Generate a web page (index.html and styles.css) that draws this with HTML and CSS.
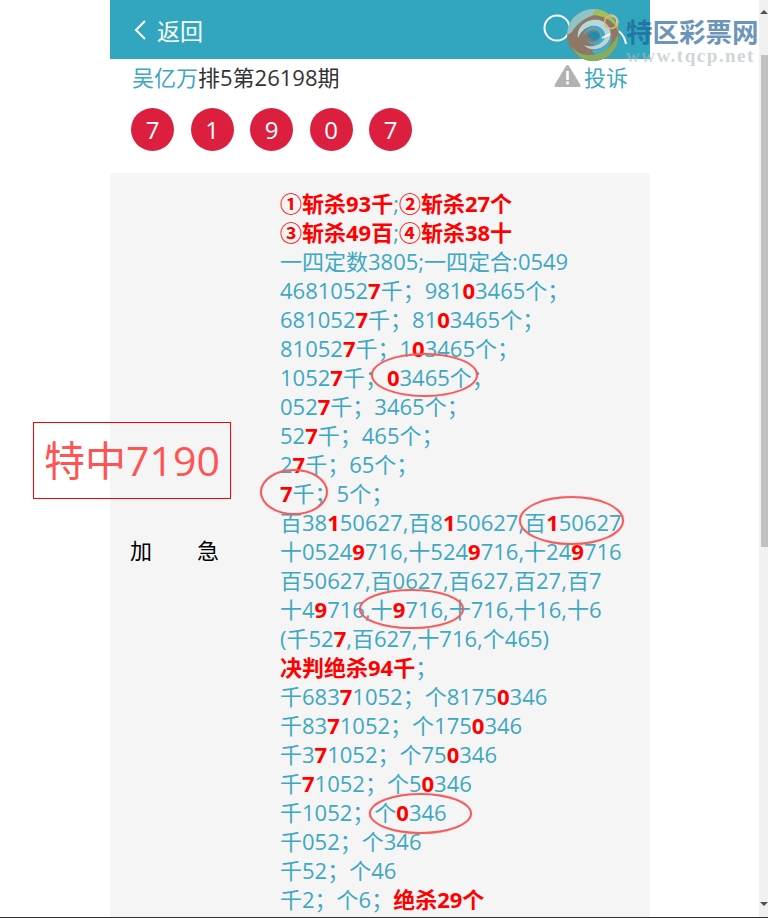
FILE: index.html
```html
<!DOCTYPE html>
<html lang="zh-CN">
<head>
  <meta charset="UTF-8">
  <title>吴亿万排5第26198期</title>
  <link rel="stylesheet" href="styles.css">
</head>
<body>
  <div class="page">
    <div class="wrap">
      <!-- Header -->
      <div class="header">
        <a class="back">
          <svg class="back-icon" width="14" height="22" viewBox="0 0 14 22"><path d="M12 2 L3 11 L12 20" fill="none" stroke="#fff" stroke-width="2"/></svg>
          返回
        </a>
        <div class="tools">
          <svg width="30" height="30" viewBox="0 0 30 30"><circle cx="14" cy="14" r="12.5" fill="none" stroke="#fff" stroke-width="2"/></svg>
          <svg width="34" height="32" viewBox="0 0 34 32"><circle cx="16" cy="8" r="6.5" fill="none" stroke="#fff" stroke-width="2"/><path d="M2 30 C4 20 9 15 16 15 C23 15 29 20 31 30" fill="none" stroke="#fff" stroke-width="2"/></svg>
        </div>
      </div>

      <!-- Title -->
      <div class="title-row">
        <div class="title"><span class="author">吴亿万</span>排5第26198期</div>
        <div class="report">
          <svg width="27" height="23" viewBox="0 0 27 23"><path d="M13.5 1 Q14.5 1 15 2 L26.5 21 Q27 23 25 23 L2 23 Q0 23 .5 21 L12 2 Q12.5 1 13.5 1 Z" fill="#b2b2b2"/><rect x="12.2" y="7" width="2.6" height="9" fill="#fff"/><rect x="12.2" y="17.5" width="2.6" height="2.8" fill="#fff"/></svg>
          <span>投诉</span>
        </div>
      </div>

      <!-- Balls -->
      <div class="balls">
        <span class="ball">7</span>
        <span class="ball">1</span>
        <span class="ball">9</span>
        <span class="ball">0</span>
        <span class="ball">7</span>
      </div>

      <!-- Content -->
      <div class="panel">
        <div class="urgent"><span>加</span><span>急</span></div>
        <div class="lines">
          <p class="hot">①斩杀93千<i>;</i>②斩杀27个</p>
          <p class="hot">③斩杀49百<i>;</i>④斩杀38十</p>
          <p>一四定数3805;一四定合:0549</p>
          <p>4681052<b>7</b>千；981<b>0</b>3465个；</p>
          <p>681052<b>7</b>千；81<b>0</b>3465个；</p>
          <p>81052<b>7</b>千；1<b>0</b>3465个；</p>
          <p>1052<b>7</b>千；<b>0</b>3465个；</p>
          <p>052<b>7</b>千；3465个；</p>
          <p>52<b>7</b>千；465个；</p>
          <p>2<b>7</b>千；65个；</p>
          <p><b>7</b>千；5个；</p>
          <p>百38<b>1</b>50627,百8<b>1</b>50627,百<b>1</b>50627</p>
          <p>十0524<b>9</b>716,十524<b>9</b>716,十24<b>9</b>716</p>
          <p>百50627,百0627,百627,百27,百7</p>
          <p>十4<b>9</b>716,十<b>9</b>716,十716,十16,十6</p>
          <p>(千52<b>7</b>,百627,十716,个465)</p>
          <p><strong>决判绝杀94千</strong>；</p>
          <p>千683<b>7</b>1052；个8175<b>0</b>346</p>
          <p>千83<b>7</b>1052；个175<b>0</b>346</p>
          <p>千3<b>7</b>1052；个75<b>0</b>346</p>
          <p>千<b>7</b>1052；个5<b>0</b>346</p>
          <p>千1052；个<b>0</b>346</p>
          <p>千052；个346</p>
          <p>千52；个46</p>
          <p>千2；个6；<strong>绝杀29个</strong></p>
        </div>
      </div>
    </div>

    <!-- Stamp and hand drawn rings over the content -->
    <div class="stamp">特中7190</div>
    <span class="ring ring-a"></span>
    <span class="ring ring-b"></span>
    <span class="ring ring-c"></span>
    <span class="ring ring-d"></span>
    <span class="ring ring-e"></span>

    <!-- Watermark -->
    <div class="mark">
      <svg class="mark-logo" width="54" height="54" viewBox="0 0 54 54">
        <circle cx="27" cy="27" r="26" fill="#8d7867"/>
        <path d="M27 1 A26 26 0 0 1 41 5 C30 5 14 10 6 24 C3 26 2 27 1 27 A26 26 0 0 1 27 1 Z" fill="#8fc4c4"/>
        <path d="M30 1 A26 26 0 0 1 53 27 C52 18 44 8 26 7 Z" fill="#a3bd5a"/>
        <path d="M5 38 C14 50 32 50 44 38 C48 34 51 30 52 26 C54 40 42 53 27 53 C17 53 9 47 5 38 Z" fill="#86ad5e"/>
        <path d="M12 30 C10 18 22 10 33 12 C44 15 48 26 42 34 C36 42 24 44 18 37 C24 40 34 38 37 31 C40 23 33 16 25 18 C18 20 14 25 12 30 Z" fill="#b7d8d8"/>
        <path d="M17 29 C18 21 26 16 33 19 C40 22 41 30 36 34 C31 39 23 37 21 32 C24 35 30 35 33 31 C36 27 33 22 28 22 C23 22 19 25 17 29 Z" fill="#46a9cc"/>
        <path d="M22 29 C22 25 27 23 30 24 C34 25 35 29 32 31 C29 33 25 32 22 29 Z" fill="#1f8cb4"/>
        <path d="M26 42 C34 42 42 38 46 28 C46 38 38 46 28 46 Z" fill="#3fb0d0"/>
        <path d="M36 30 L44 26" fill="none" stroke="#fff" stroke-width="1.5"/>
        <circle cx="45" cy="14" r="6.5" fill="none" stroke="#eab070" stroke-width="1.5"/>
      </svg>
      <div class="mark-text">
        <div class="mark-name">特区彩票网</div>
        <div class="mark-url">www.tqcp.net</div>
      </div>
    </div>
  </div>

  <!-- Scrollbar -->
  <div class="scrollbar">
    <div class="arrow-up"></div>
    <div class="thumb"></div>
    <div class="arrow-down"></div>
  </div>
</body>
</html>
```

FILE: styles.css
```css
/* General Styles */
html, body {
  margin: 0;
  padding: 0;
  height: 918px;
  overflow: hidden;
  background: #fff;
}

body {
  font-family: "Open Sans", "Noto Sans CJK SC", sans-serif;
  color: #333;
  border-bottom: 1px solid #333;
  box-sizing: border-box;
}

.page {
  position: relative;
  height: 917px;
  overflow: hidden;
}

.wrap {
  width: 540px;
  margin-left: 110px;
}

/* Header */
.header {
  height: 59px;
  background: #32a6bf;
  display: flex;
  justify-content: space-between;
  align-items: center;
  color: #fff;
  font-size: 23px;
}

.back {
  display: flex;
  align-items: center;
  gap: 10px;
  padding-left: 23px;
}

.tools {
  display: flex;
  gap: 22px;
  margin-right: 21px;
  align-items: flex-start;
}

/* Title */
.title-row {
  height: 38px;
  box-sizing: border-box;
  padding: 0 22px 5px 22px;
  display: flex;
  justify-content: space-between;
  align-items: center;
  font-size: 22px;
}

.author,
.report span {
  color: #3da8c2;
}

.report {
  display: flex;
  align-items: center;
  gap: 3px;
}

/* Balls */
.balls {
  display: flex;
  gap: 16.5px;
  padding: 11px 0 0 21px;
  height: 76px;
  box-sizing: border-box;
}

.ball {
  width: 43px;
  height: 43px;
  border-radius: 50%;
  background: #dc1f3f;
  color: #fff;
  font-size: 24px;
  line-height: 43px;
  text-align: center;
}

/* Panel */
.panel {
  background: #f5f5f5;
  display: flex;
  align-items: center;
  padding: 16px 0 17px;
}

.urgent {
  width: 170px;
  padding-left: 20px;
  margin-bottom: 6px;
  box-sizing: border-box;
  display: flex;
  gap: 45px;
  font-size: 22px;
  color: #000;
}

.lines {
  flex: 1;
  font-size: 22px;
  line-height: 29px;
  color: #3da8c2;
}

.lines p {
  margin: 0;
  height: 29px;
  white-space: nowrap;
}

.lines b,
.lines strong,
.hot {
  color: #f00;
  font-weight: 700;
}

.hot i {
  font-style: normal;
  font-weight: 400;
  color: #3da8c2;
}

/* Stamp */
.stamp {
  position: absolute;
  left: 33px;
  top: 422px;
  width: 198px;
  height: 77px;
  box-sizing: border-box;
  border: 1px solid #f00;
  color: #ff5454;
  font-size: 41px;
  line-height: 75px;
  text-align: center;
}

/* Rings */
.ring {
  position: absolute;
  box-sizing: border-box;
  border: 2px solid #f25c5c;
  border-radius: 50%;
  box-shadow: 0 0 1px #f25c5c;
}

.ring-a { left: 371px; top: 353px; width: 107px; height: 44px; }
.ring-b { left: 260px; top: 469px; width: 68px; height: 46px; }
.ring-c { left: 519px; top: 496px; width: 105px; height: 49px; }
.ring-d { left: 359px; top: 589px; width: 105px; height: 40px; }
.ring-e { left: 369px; top: 793px; width: 103px; height: 41px; }

/* Watermark */
.mark {
  position: absolute;
  left: 566px;
  top: 8px;
  width: 194px;
  display: flex;
  gap: 6px;
}

.mark-logo {
  flex: none;
}

.mark-name {
  font-family: "Noto Sans CJK SC", sans-serif;
  font-weight: 700;
  font-size: 26.5px;
  line-height: 30px;
  margin-top: 8px;
  color: rgba(30, 95, 150, 0.68);
  white-space: nowrap;
}

.mark-url {
  font-family: "Liberation Serif", serif;
  font-weight: 700;
  font-size: 19px;
  letter-spacing: 1.5px;
  color: rgba(170, 185, 190, 0.6);
  line-height: 20px;
  white-space: nowrap;
}

/* Scrollbar */
.scrollbar {
  position: absolute;
  right: 0;
  top: 0;
  width: 9px;
  height: 917px;
  background: #f1f1f1;
}

.thumb {
  position: absolute;
  top: 55px;
  left: 2px;
  width: 7px;
  height: 492px;
  background: #c1c1c1;
}

.arrow-up,
.arrow-down {
  position: absolute;
  right: 0;
  width: 0;
  height: 0;
  border-left: 4px solid transparent;
  border-right: 4px solid transparent;
}

.arrow-up {
  top: 10px;
  border-bottom: 4px solid #505050;
}

.arrow-down {
  bottom: 11px;
  border-top: 4px solid #505050;
}
```
